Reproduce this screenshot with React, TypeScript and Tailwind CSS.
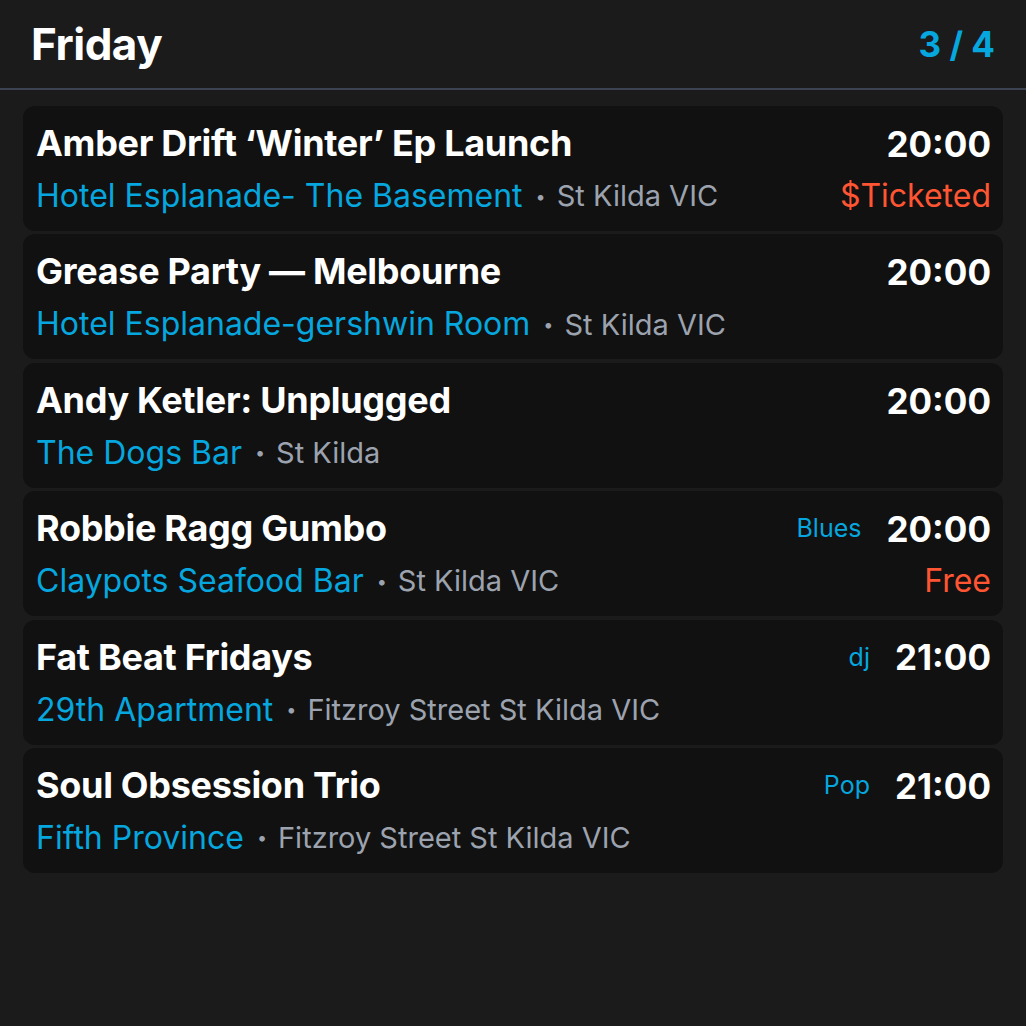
import React from 'react';

interface Gig {
    title: string;
    venue: string;
    location: string;
    time: string;
    genre?: string;
    price?: string;
}

const gigs: Gig[] = [
    { title: 'Amber Drift ‘Winter’ Ep Launch', venue: 'Hotel Esplanade- The Basement', location: 'St Kilda VIC', time: '20:00', price: '$Ticketed' },
    { title: 'Grease Party — Melbourne', venue: 'Hotel Esplanade-gershwin Room', location: 'St Kilda VIC', time: '20:00' },
    { title: 'Andy Ketler: Unplugged', venue: 'The Dogs Bar', location: 'St Kilda', time: '20:00' },
    { title: 'Robbie Ragg Gumbo', venue: 'Claypots Seafood Bar', location: 'St Kilda VIC', time: '20:00', genre: 'Blues', price: 'Free' },
    { title: 'Fat Beat Fridays', venue: '29th Apartment', location: 'Fitzroy Street St Kilda VIC', time: '21:00', genre: 'dj' },
    { title: 'Soul Obsession Trio', venue: 'Fifth Province', location: 'Fitzroy Street St Kilda VIC', time: '21:00', genre: 'Pop' }
];

const GigCard: React.FC<{ gig: Gig }> = ({ gig }) => (
    <div className="flex h-[125px] rounded-[12px] bg-[#111111] pl-[13px] pr-[12px] pt-[12px]">
        <div className="flex min-w-0 flex-1 flex-col">
            <div className="flex h-[50px] items-center whitespace-nowrap text-[36px] font-bold tracking-[-0.3px] text-white">
                {gig.title}
            </div>
            <div className="flex h-[56px] items-center whitespace-nowrap">
                <span className="text-[32px] text-[#06a6de]">{gig.venue}</span>
                <span className="ml-[13px] mr-[11px] text-[18px] text-[#9ca3af]">•</span>
                <span className="text-[29px] text-[#9ca3af]">{gig.location}</span>
            </div>
        </div>
        <div className="flex flex-col items-end">
            <div className="flex h-[52px] items-center gap-[25px]">
                {gig.genre && <span className="text-[25px] text-[#06a6de]">{gig.genre}</span>}
                <span className="text-[35px] font-bold text-white">{gig.time}</span>
            </div>
            <div className="flex h-[52px] items-center text-[32px] text-[#ff5533]">
                {gig.price}
            </div>
        </div>
    </div>
);

export default function App() {
    return (
        <div className="min-h-[1026px] w-full bg-[#1b1b1b] font-['Inter',sans-serif]">
            <div className="flex h-[90px] items-center justify-between border-b-[2px] border-[#3b4352] pl-[31px] pr-[31px]">
                <h1 className="text-[44px] font-bold tracking-[-0.5px] text-white">Friday</h1>
                <span className="text-[35px] font-bold text-[#06a6de]">3 / 4</span>
            </div>
            <div className="flex flex-col gap-[3.4px] px-[23px] pt-[16px]">
                {gigs.map(gig => (
                    <GigCard key={gig.title} gig={gig} />
                ))}
            </div>
        </div>
    );
}
